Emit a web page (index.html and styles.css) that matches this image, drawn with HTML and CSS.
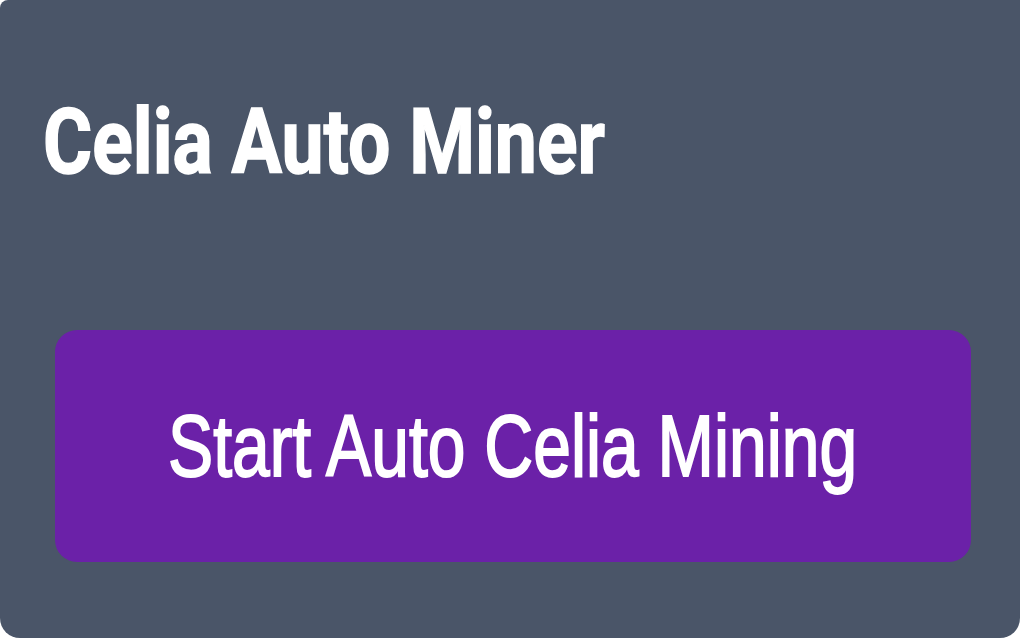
FILE: index.html
```html
<!DOCTYPE html>
<html>
<head>
<meta charset="utf-8">
<link rel="stylesheet" href="styles.css">
</head>
<body>
<div class="popup">
  <h1 class="title"><span class="title-text">Celia Auto Miner</span></h1>
  <button class="start-btn"><span class="btn-text">Start Auto Celia Mining</span></button>
</div>
</body>
</html>
```
FILE: styles.css
```css
html, body {
  margin: 0;
  padding: 0;
  background: #ffffff;
}
.popup {
  width: 1020px;
  height: 638px;
  box-sizing: border-box;
  background: #4a5568;
  border-radius: 8px 0 20px 20px;
  padding: 93px 0 0 43px;
  display: flex;
  flex-direction: column;
  align-items: flex-start;
}
.title {
  margin: 0;
  font-family: Roboto, "Liberation Sans", sans-serif;
  font-weight: 700;
  font-size: 90px;
  line-height: 100px;
  color: #ffffff;
  white-space: nowrap;
}
.title-text {
  display: inline-block;
  transform: scaleX(0.835);
  transform-origin: left center;
  -webkit-text-stroke: 1.5px #ffffff;
}
.start-btn {
  margin: 137px 0 0 12px;
  width: 916px;
  height: 232px;
  border: none;
  border-radius: 22px;
  background: #6b21a8;
  color: #ffffff;
  font-family: "Liberation Sans", Arial, sans-serif;
  font-size: 88px;
  display: flex;
  align-items: center;
  justify-content: center;
  padding: 0;
  white-space: nowrap;
}
.btn-text {
  display: inline-block;
  transform: scaleX(0.77);
  transform-origin: center center;
  -webkit-text-stroke: 2px #ffffff;
}
```
